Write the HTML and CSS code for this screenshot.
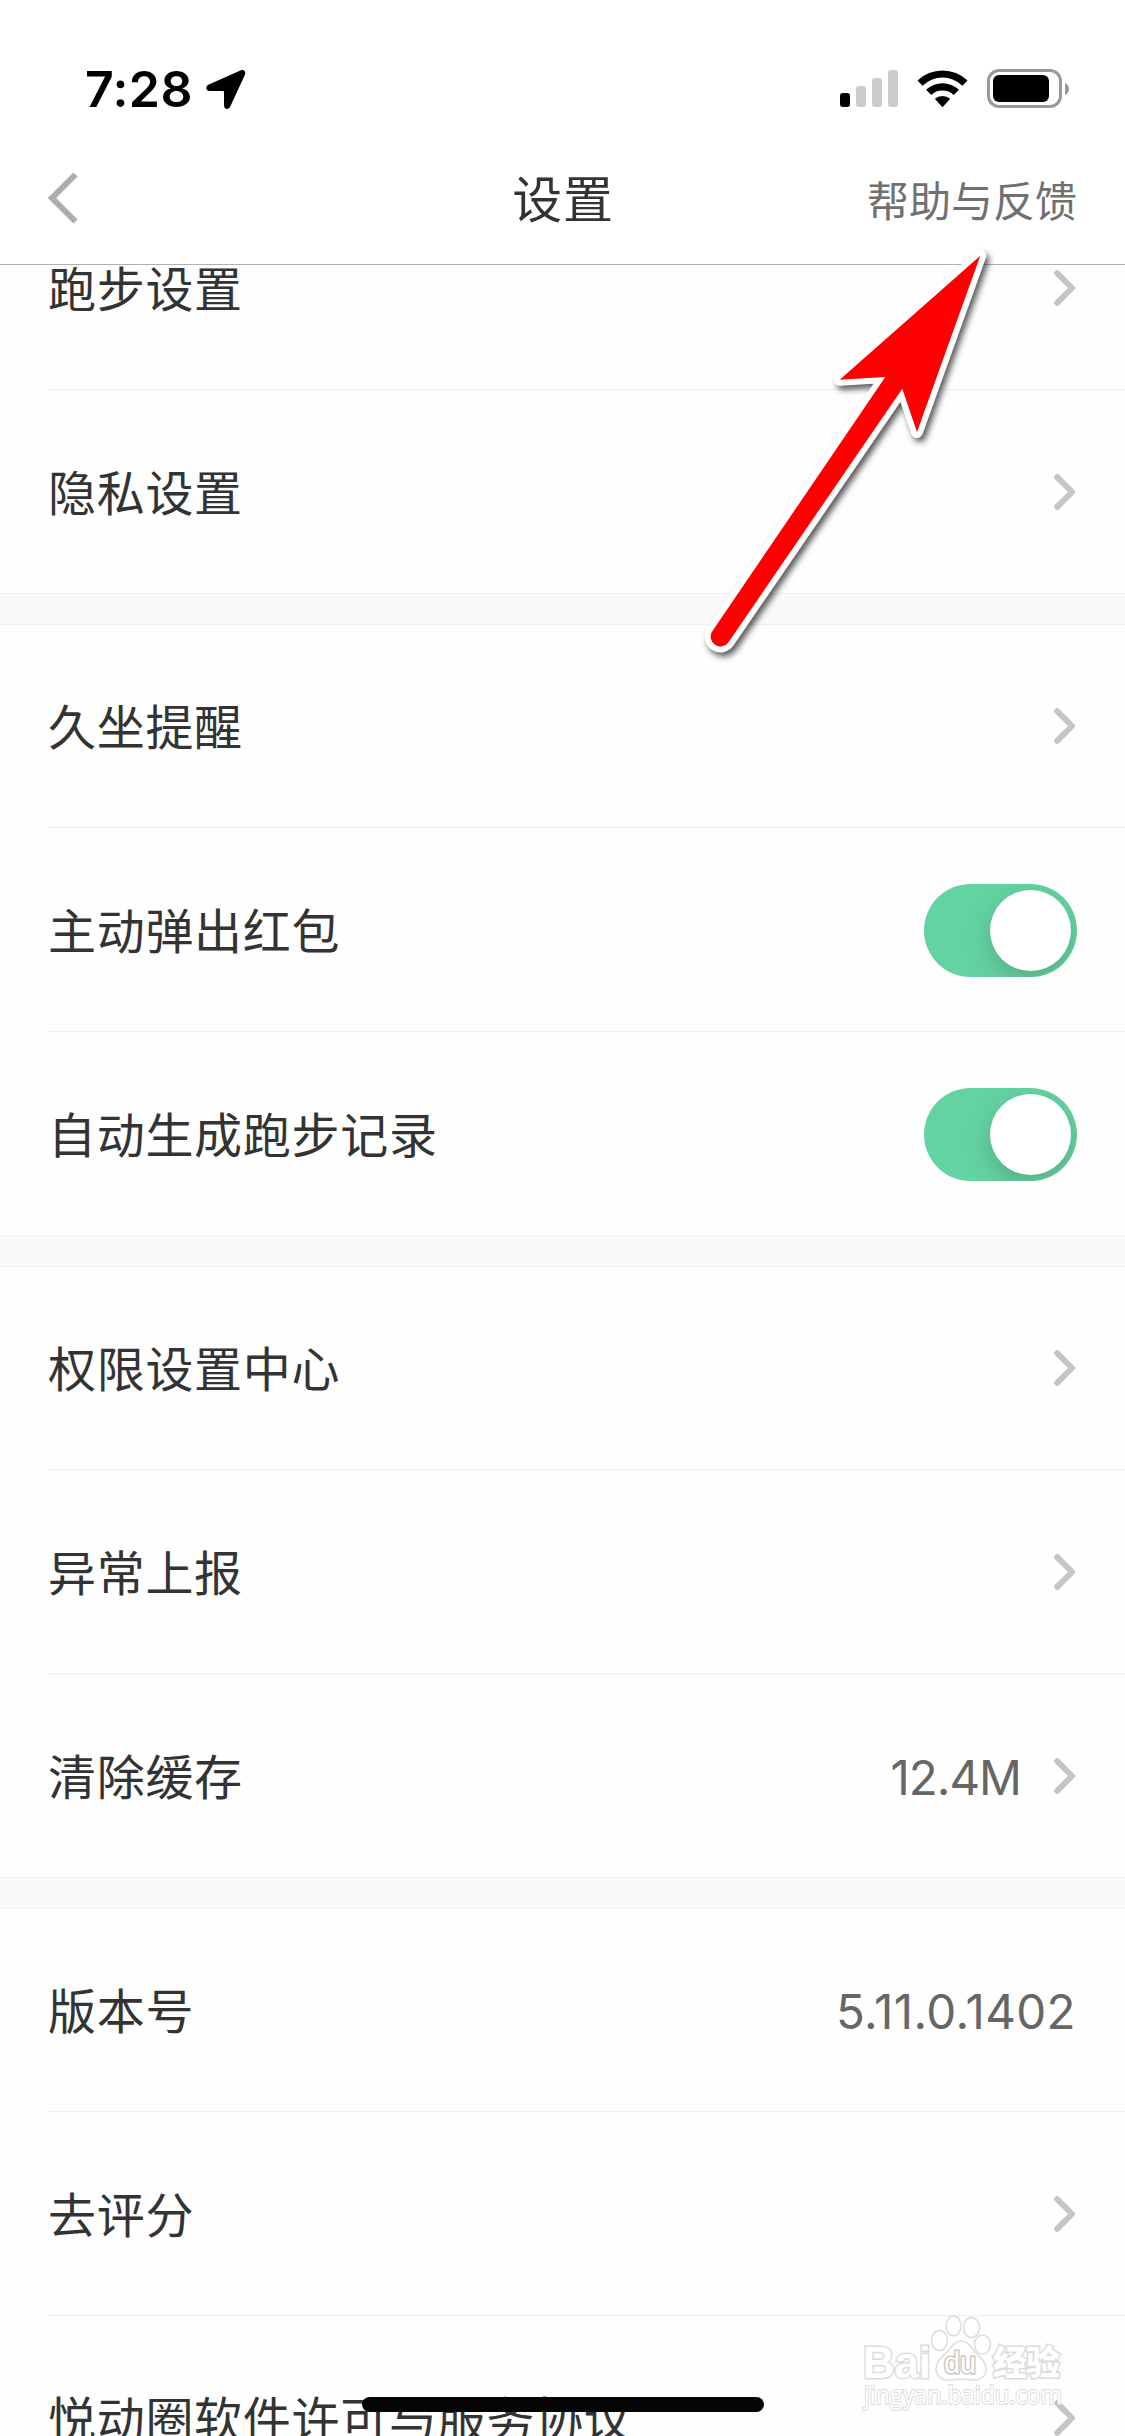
FILE: index.html
```html
<!DOCTYPE html>
<html lang="zh-CN">
<head>
<meta charset="utf-8">
<title>设置</title>
<link rel="stylesheet" href="styles.css">
</head>
<body>
<svg class="defs" width="0" height="0">
  <symbol id="chevron" viewBox="0 0 22 36"><path d="M3.2 3.2 18 18 3.2 32.8" fill="none" stroke="#c5c5c8" stroke-width="6" stroke-linecap="round" stroke-linejoin="round"/></symbol>
</svg>
<div class="screen">
  <header class="header">
    <div class="status">
      <span class="time">7:28</span>
      <svg class="location" width="40" height="40" viewBox="0 0 40 40"><path d="M35 .3 2.8 14.4C-1 16.200-.3 21 3.500 21H17Q18 21 18 22V35.500C18 39.500 22.500 40 24.200 36.800L38.800 5C40.200 1.500 38-.8 35 .3Z"/></svg>
      <svg class="indicators" width="230" height="42" viewBox="0 0 230 42">
        <rect x="0" y="24" width="10" height="14" rx="3"/>
        <g fill="#ccc"><rect x="16" y="17" width="10" height="21" rx="3"/><rect x="32" y="9" width="10" height="29" rx="3"/><rect x="48" y="1" width="10" height="37" rx="3"/></g>
        <path d="M77.500 11.500a36 36 0 0 1 50 0l-5 5.200a28.500 28.500 0 0 0-40 0ZM86 20.800a24 24 0 0 1 33 0l-5.300 5.200a16.500 16.500 0 0 0-22.400 0ZM94.800 29.800a12 12 0 0 1 15.400 0l-7.700 8.400Z"/>
        <rect x="148.500" y="1.500" width="72" height="36" rx="10.500" fill="none" stroke="#999" stroke-width="3"/>
        <rect x="153" y="6" width="56" height="27" rx="6"/>
        <path d="M225 14q4 1.500 4 6t-4 6Z" fill="#999"/>
      </svg>
    </div>
    <nav class="nav">
      <svg class="back" width="31" height="52" viewBox="0 0 31 52"><path d="M27.500 2.500 4 26 27.500 49.500" fill="none" stroke="#adadad" stroke-width="6"/></svg>
      <h1 class="title">设置</h1>
      <a class="help">帮助与反馈</a>
    </nav>
  </header>
  <main class="list">
    <section class="group">
      <div class="row"><span>跑步设置</span><svg class="chevron"><use href="#chevron"/></svg></div>
      <div class="row"><span>隐私设置</span><svg class="chevron"><use href="#chevron"/></svg></div>
    </section>
    <section class="group">
      <div class="row"><span>久坐提醒</span><svg class="chevron"><use href="#chevron"/></svg></div>
      <div class="row"><span>主动弹出红包</span><span class="switch"><i class="knob"></i></span></div>
      <div class="row"><span>自动生成跑步记录</span><span class="switch"><i class="knob"></i></span></div>
    </section>
    <section class="group">
      <div class="row"><span>权限设置中心</span><svg class="chevron"><use href="#chevron"/></svg></div>
      <div class="row"><span>异常上报</span><svg class="chevron"><use href="#chevron"/></svg></div>
      <div class="row"><span>清除缓存</span><span class="value size">12.4M</span><svg class="chevron"><use href="#chevron"/></svg></div>
    </section>
    <section class="group">
      <div class="row"><span>版本号</span><span class="value">5.11.0.1402</span></div>
      <div class="row"><span>去评分</span><svg class="chevron"><use href="#chevron"/></svg></div>
      <div class="row"><span>悦动圈软件许可与服务协议</span><svg class="chevron"><use href="#chevron"/></svg></div>
    </section>
  </main>
  <svg class="pointer" width="310" height="430" viewBox="690 240 310 430">
    <path d="M980.300 255.700 839.700 379.700 885.300 377 712.300 631.300A9.700 9.700 0 0 0 728.500 642.200L902.300 388.700 917 432Z" fill="#fff" stroke="#fff" stroke-width="12" stroke-linejoin="round"/>
    <path d="M980.300 255.700 839.700 379.700 885.300 377 712.300 631.300A9.700 9.700 0 0 0 728.500 642.200L902.300 388.700 917 432Z" fill="#f00"/>
  </svg>
  <svg class="watermark" width="215" height="105" viewBox="860 2310 215 105">
    <g fill="#fff" stroke="#dcdcdc" stroke-width="1.500">
      <ellipse cx="939.500" cy="2340.500" rx="8" ry="10"/><ellipse cx="953.500" cy="2326" rx="7.500" ry="10"/><ellipse cx="971.500" cy="2327.500" rx="8" ry="10"/><ellipse cx="982.500" cy="2344.500" rx="8" ry="9.500"/>
      <path d="M961 2341c7 0 10 7 15 12s10 9 10 16c0 8-6 11-12 11-5 0-8-1-13-1s-8 1-13 1c-6 0-12-4-12-11s5-11 10-16 8-12 15-12Z"/>
      <g class="brand" paint-order="stroke" stroke-width="3">
        <text class="latin" x="863" y="2378" font-size="45" textLength="68" lengthAdjust="spacingAndGlyphs">Bai</text>
        <text class="du" x="944" y="2373" font-size="29" textLength="32" lengthAdjust="spacingAndGlyphs">du</text>
        <text class="cjk" x="993" y="2375" font-size="34" textLength="67">经验</text>
        <text class="url" x="864" y="2404" font-size="25" textLength="198" lengthAdjust="spacingAndGlyphs">jingyan.baidu.com</text>
      </g>
    </g>
  </svg>
  <div class="home-indicator"></div>
</div>
</body>
</html>
```
FILE: styles.css
```css
* { box-sizing: border-box; }
body { margin: 0; background: #fff; }
.defs { position: absolute; }
.screen {
  position: relative;
  width: 1125px;
  height: 2436px;
  overflow: hidden;
  background: #fefefe;
  color: #333;
  font-family: Inter, "Noto Sans CJK SC", sans-serif;
}
.header { height: 265px; border-bottom: 1px solid #b0b0b0; background: #fff; }
.status {
  display: flex;
  height: 132px;
  padding: 69px 55px 0 85px;
  color: #000;
}
.time {
  width: 121px;
  font-size: 50px;
  line-height: 40px;
  font-weight: 600;
  letter-spacing: 0.4px;
  white-space: nowrap;
}
.location { margin-top: 1px; }
.indicators { margin-left: auto; }
.nav {
  display: grid;
  grid-template-columns: 1fr auto 1fr;
  align-items: center;
  height: 132px;
  padding: 0 48px;
}
.title { margin: 3px 0 0 1px; font-size: 50px; line-height: 72px; font-weight: 400; letter-spacing: 0.8px; }
.help { justify-self: end; margin-top: 7px; font-size: 42px; line-height: 60px; font-weight: 400; color: #707070; }
.list { overflow: hidden; height: 2171px; background: #fafafa; }
.group { margin-bottom: 30px; border-top: 1px solid #f0f0f0; background: #fefefe; }
.group:first-child { margin-top: -80px; }
.row {
  position: relative;
  display: flex;
  align-items: center;
  justify-content: space-between;
  height: 204px;
  padding: 4px 50px 0 48px;
  font-size: 48px;
  line-height: 68px;
  letter-spacing: 0.7px;
}
.group:not(:first-child) .row:first-child { margin-top: -1px; }
.row::after {
  content: "";
  position: absolute;
  left: 48px;
  right: 0;
  bottom: 0;
  height: 1px;
  background: #f0f0f0;
}
.row:last-child::after { left: 0; }
.chevron { flex: none; width: 22px; height: 36px; margin: -4px -1px 0 0; }
.value { color: #666; font-size: 47.5px; letter-spacing: 0.4px; margin-right: -1px; }
.value.size { margin-left: auto; margin-right: 33px; letter-spacing: -1px; }
.switch {
  flex: none;
  width: 153px;
  height: 93px;
  margin: -3px -2px 0 0;
  padding: 6px;
  border-radius: 47px;
  overflow: hidden;
  background: #63d4a1;
}
.knob {
  display: block;
  width: 81px;
  height: 81px;
  margin-left: auto;
  border-radius: 50%;
  background: #fff;
  box-shadow: 0 9px 24px rgba(60, 80, 70, 0.3);
}
.pointer { position: absolute; left: 690px; top: 240px; filter: drop-shadow(3px 4px 3px rgba(0, 0, 0, 0.65)); }
.watermark { position: absolute; left: 860px; top: 2310px; }
.latin, .du { font-family: "Liberation Sans", sans-serif; font-weight: 700; }
.du { stroke: #c8c8c8; font-weight: 400; }
.cjk { font-family: "Noto Sans CJK SC", sans-serif; font-weight: 900; }
.url { font-family: "Open Sans", sans-serif; stroke-width: 2px; }
.home-indicator {
  position: absolute;
  left: 362px;
  top: 2397px;
  width: 402px;
  height: 15px;
  border-radius: 8px;
  background: #050505;
}
```
